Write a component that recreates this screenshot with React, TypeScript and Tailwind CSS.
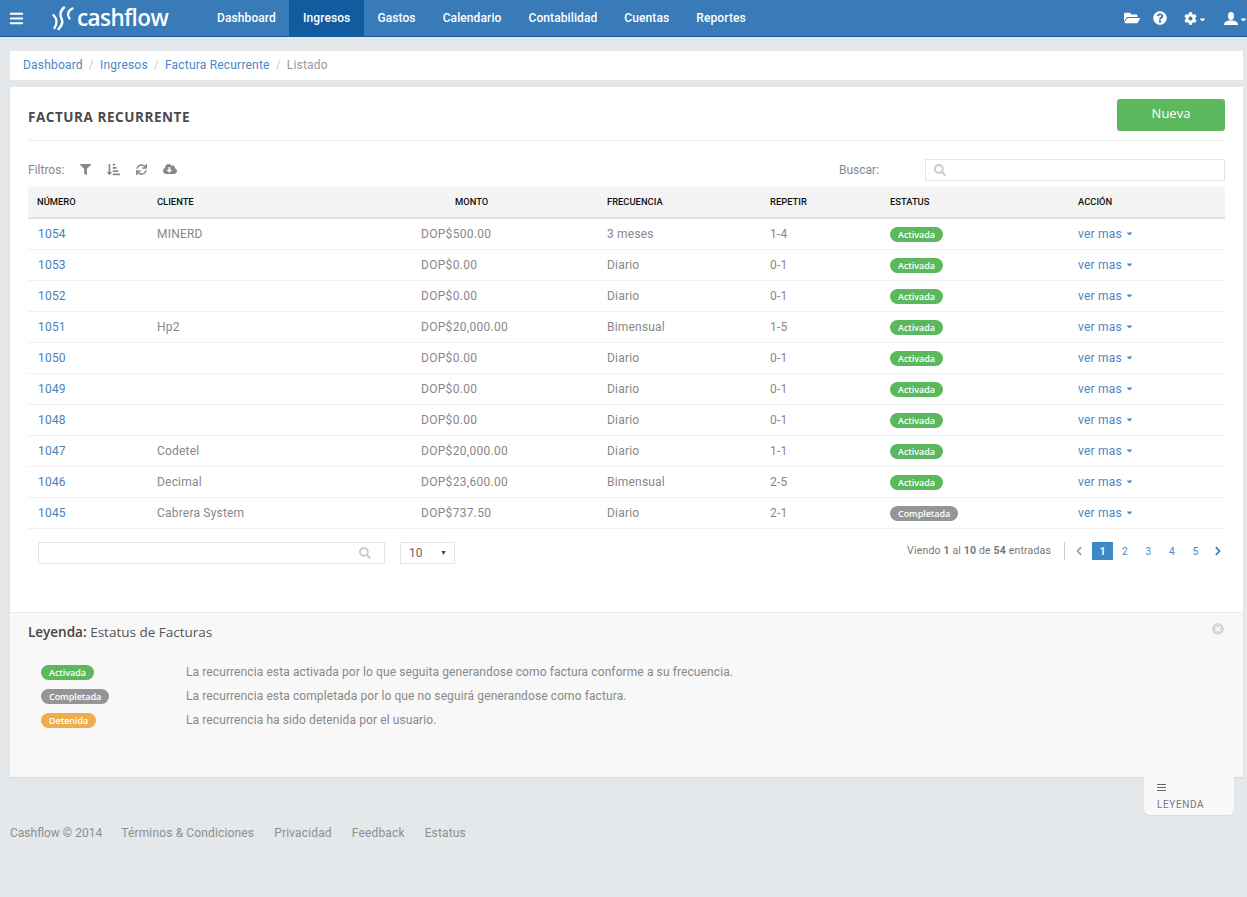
import { FaBars, FaFolderOpen, FaQuestionCircle, FaCog, FaFilter, FaSortAmountDownAlt, FaSync, FaCloudDownloadAlt, FaSearch, FaChevronLeft, FaChevronRight, FaTimesCircle, FaCaretDown } from "react-icons/fa";

const nav = ["Dashboard", "Ingresos", "Gastos", "Calendario", "Contabilidad", "Cuentas", "Reportes"];
const rows = [
  ["1054", "MINERD", "DOP$500.00", "3 meses", "1-4", "Activada"],
  ["1053", "", "DOP$0.00", "Diario", "0-1", "Activada"],
  ["1052", "", "DOP$0.00", "Diario", "0-1", "Activada"],
  ["1051", "Hp2", "DOP$20,000.00", "Bimensual", "1-5", "Activada"],
  ["1050", "", "DOP$0.00", "Diario", "0-1", "Activada"],
  ["1049", "", "DOP$0.00", "Diario", "0-1", "Activada"],
  ["1048", "", "DOP$0.00", "Diario", "0-1", "Activada"],
  ["1047", "Codetel", "DOP$20,000.00", "Diario", "1-1", "Activada"],
  ["1046", "Decimal", "DOP$23,600.00", "Bimensual", "2-5", "Activada"],
  ["1045", "Cabrera System", "DOP$737.50", "Diario", "2-1", "Completada"],
];

function Badge({ label }: { label: string }) {
  const color = label === "Activada" ? "bg-[#5cb85c]" : label === "Completada" ? "bg-[#959595]" : "bg-[#f0ad4e]";
  return (
    <span className={`inline-block h-[15px] rounded-full px-[8px] font-['Open_Sans',sans-serif] text-[9px] leading-[15px] font-semibold tracking-[-0.05px] text-white ${color}`}>
      {label}
    </span>
  );
}

function Logo() {
  return (
    <div className="flex items-center text-white">
      <svg width="24" height="26" viewBox="0 0 24 26" fill="none" stroke="white" strokeLinecap="round" className="mt-[2px]">
        <path d="M1.5 9 C5 12.5 6 16 2.5 22" strokeWidth="2.3" />
        <path d="M12 1.5 C7 6 8 10 10 14 C11 17 9.5 20 6.5 23" strokeWidth="2.5" />
        <path d="M20.5 2.5 C15.5 5 15 9 17.5 12.5" strokeWidth="2.3" />
      </svg>
      <span className="ml-[1px] font-['Open_Sans',sans-serif] text-[22.5px] leading-none font-semibold tracking-[-0.6px]">cashflow</span>
    </div>
  );
}

function UserIcon() {
  return (
    <svg width="14" height="13" viewBox="0 0 14 13" fill="white">
      <ellipse cx="7" cy="4" rx="3" ry="4" />
      <path d="M0 13 C0 10 2 9.5 4.5 8.5 L9.5 8.5 C12 9.5 14 10 14 13 Z" />
    </svg>
  );
}

export default function App() {
  return (
    <div className="min-h-[897px] bg-[#e4e8eb] font-['Roboto',sans-serif] text-[12px] text-[#888]">
      <header className="flex h-[37px] items-stretch border-b border-[#115ea6] bg-[#397bb8] text-white">
        <div className="flex w-[52px] items-center pl-[9px]">
          <FaBars className="text-[15px]" />
        </div>
        <div className="flex w-[151.5px] items-center">
          <Logo />
        </div>
        <nav className="flex">
          {nav.map((n) => (
            <a key={n} className={`flex items-center px-[13.5px] text-[12px] font-medium tracking-[0.1px] ${n === "Ingresos" ? "bg-[#125b9f]" : ""}`}>
              {n}
            </a>
          ))}
        </nav>
        <div className="ml-auto flex items-center">
          <FaFolderOpen className="mr-[13px] text-[16px]" />
          <FaQuestionCircle className="mr-[17px] text-[14px]" />
          <FaCog className="text-[13px]" />
          <FaCaretDown className="mr-[17px] ml-[1px] mt-[2px] text-[9px]" />
          <UserIcon />
          <FaCaretDown className="mt-[2px] ml-[2px] w-[7px] text-[9px]" />
        </div>
      </header>

      <div className="ml-[10px] mr-[4px]">
        <div className="mt-[14px] flex h-[29px] items-center bg-white pb-[2px] pl-[13px] tracking-[0.2px]">
          <a className="text-[#4a86c5]">Dashboard</a>
          <span className="mx-[6px] text-[#ccc]">/</span>
          <a className="text-[#4a86c5]">Ingresos</a>
          <span className="mx-[6px] text-[#ccc]">/</span>
          <a className="text-[#4a86c5]">Factura Recurrente</a>
          <span className="mx-[6px] text-[#ccc]">/</span>
          <span className="text-[#999]">Listado</span>
        </div>

        <main className="mt-[7px] bg-white shadow-[0_1px_1px_rgba(0,0,0,0.05)]">
          <section className="h-[525px] px-[18px] pt-[12px]">
            <div className="flex h-[42px] items-start justify-between border-b border-[#eee]">
              <h1 className="mt-[9px] font-['Open_Sans',sans-serif] text-[13.5px] leading-[18px] font-bold tracking-[0.55px] text-[#4a4a4a]">FACTURA RECURRENTE</h1>
              <button className="h-[32px] w-[108px] rounded-[3px] bg-[#5cb85c] pb-[3px] font-['Open_Sans',sans-serif] text-[13px] text-white">Nueva</button>
            </div>

            <div className="mt-[18px] flex h-[22px] items-center">
              <span className="w-[52px]">Filtros:</span>
              <div className="mb-[2px] flex items-center text-[#888]">
                <FaFilter className="text-[11px]" />
                <FaSortAmountDownAlt className="ml-[16px] text-[13px]" />
                <FaSync className="ml-[16px] text-[11px]" />
                <FaCloudDownloadAlt className="ml-[16px] text-[14px]" />
              </div>
              <span className="ml-auto w-[86px]">Buscar:</span>
              <div className="flex h-[22px] w-[300px] items-center border border-[#e5e5e5] pl-[8px]">
                <FaSearch className="text-[12px] text-[#ccc]" />
              </div>
            </div>

            <table className="mt-[6px] w-[1197px] table-fixed border-collapse">
              <colgroup>
                <col className="w-[120px]" />
                <col className="w-[264px]" />
                <col className="w-[186px]" />
                <col className="w-[163px]" />
                <col className="w-[120px]" />
                <col className="w-[188px]" />
                <col className="w-[156px]" />
              </colgroup>
              <thead>
                <tr className="h-[31px] border-b-2 border-[#e2e2e2] bg-[#f4f4f4] text-left text-[9.4px] font-medium text-[#111]">
                  <th className="pl-[9px] font-medium">NÚMERO</th>
                  <th className="pl-[9px] font-medium">CLIENTE</th>
                  <th className="pl-[43px] font-medium">MONTO</th>
                  <th className="pl-[9px] font-medium">FRECUENCIA</th>
                  <th className="pl-[9px] font-medium">REPETIR</th>
                  <th className="pl-[9px] font-medium">ESTATUS</th>
                  <th className="pl-[9px] font-medium">ACCIÓN</th>
                </tr>
              </thead>
              <tbody>
                {rows.map((r) => (
                  <tr key={r[0]} className="h-[31px] border-b border-[#f0f0f0] tracking-[0.2px]">
                    <td className="pl-[10px] text-[#4a7fb8]">{r[0]}</td>
                    <td className="pl-[9px]">{r[1]}</td>
                    <td className="pl-[9px] tracking-[0.3px]">{r[2]}</td>
                    <td className="pl-[9px]">{r[3]}</td>
                    <td className="pl-[9px]">{r[4]}</td>
                    <td className="pl-[9px]"><Badge label={r[5]} /></td>
                    <td className="pl-[9px] text-[#4a86c5]">
                      <span className="inline-flex items-center">ver mas<FaCaretDown className="ml-[3px] text-[9px]" /></span>
                    </td>
                  </tr>
                ))}
              </tbody>
            </table>

            <div className="mt-[13px] flex h-[23px] items-center pl-[10px]">
              <div className="flex h-[22px] w-[347px] items-center justify-end border border-[#e5e5e5] pr-[13px]">
                <FaSearch className="text-[12px] text-[#ccc]" />
              </div>
              <div className="ml-[15px] flex h-[22px] w-[55px] items-center justify-between border border-[#e5e5e5] pr-[7px] pl-[8px] text-[#666]">
                <span>10</span>
                <span className="text-[7px] text-[#444]">▼</span>
              </div>
              <div className="mr-[2px] mb-[4px] ml-auto flex items-center">
                <span className="text-[10.5px] tracking-[0.17px] text-[#777]">Viendo <b className="font-bold">1</b> al <b className="font-bold">10</b> de <b className="font-bold">54</b> entradas</span>
                <div className="mr-[9px] ml-[13px] h-[18px] border-l border-[#ccc]" />
                <FaChevronLeft className="mr-[8px] text-[10px] text-[#999]" />
                <span className="flex h-[18px] w-[21px] items-center justify-center bg-[#3f88c8] text-[10px] font-bold text-white">1</span>
                {["2", "3", "4", "5"].map((p) => (
                  <span key={p} className="flex h-[18px] w-[23.5px] items-center justify-center text-[10px] text-[#4a86c5]">{p}</span>
                ))}
                <FaChevronRight className="ml-[6px] text-[10px] text-[#2f79bd]" />
              </div>
            </div>
          </section>

          <section className="relative h-[165px] border-t border-[#eaeaea] bg-[#f8f8f8] pt-[9px] pl-[18px]">
            <h2 className="font-['Open_Sans',sans-serif] text-[13.5px] leading-[20px] text-[#555]">
              <span className="font-semibold text-[#444]">Leyenda:</span> Estatus de Facturas
            </h2>
            <FaTimesCircle className="absolute top-[10px] right-[19px] text-[12px] text-[#d5d5d5]" />
            <div className="mt-[18px] flex flex-col tracking-[0.1px]">
              {[
                ["Activada", "La recurrencia esta activada por lo que seguita generandose como factura conforme a su frecuencia."],
                ["Completada", "La recurrencia esta completada por lo que no seguirá generandose como factura."],
                ["Detenida", "La recurrencia ha sido detenida por el usuario."],
              ].map(([b, t]) => (
                <div key={b} className="flex h-[24px] items-center pl-[13px]">
                  <div className="w-[145px]"><Badge label={b} /></div>
                  <span>{t}</span>
                </div>
              ))}
            </div>
          </section>
        </main>

        <footer className="relative mt-[48px] flex h-[16px] items-center text-[#8e8e8e]">
          <span>Cashflow © 2014</span>
          <a className="ml-[19px] tracking-[0.15px]">Términos &amp; Condiciones</a>
          <a className="ml-[20px] tracking-[0.15px]">Privacidad</a>
          <a className="ml-[20px] tracking-[0.15px]">Feedback</a>
          <a className="ml-[20px] tracking-[0.15px]">Estatus</a>
          <div className="absolute top-[-49px] right-[9px] h-[39px] w-[90px] rounded-b-[6px] bg-[#f9f9f9] pt-[8px] pl-[13px] text-[10px] text-[#777] shadow-[0_1px_1px_rgba(0,0,0,0.06)]">
            <div className="mb-[6px] w-[9px] border-y border-[#666] py-[2px]"><div className="border-t border-[#666]" /></div>
            <span className="tracking-[0.6px]">LEYENDA</span>
          </div>
        </footer>
      </div>
    </div>
  );
}
